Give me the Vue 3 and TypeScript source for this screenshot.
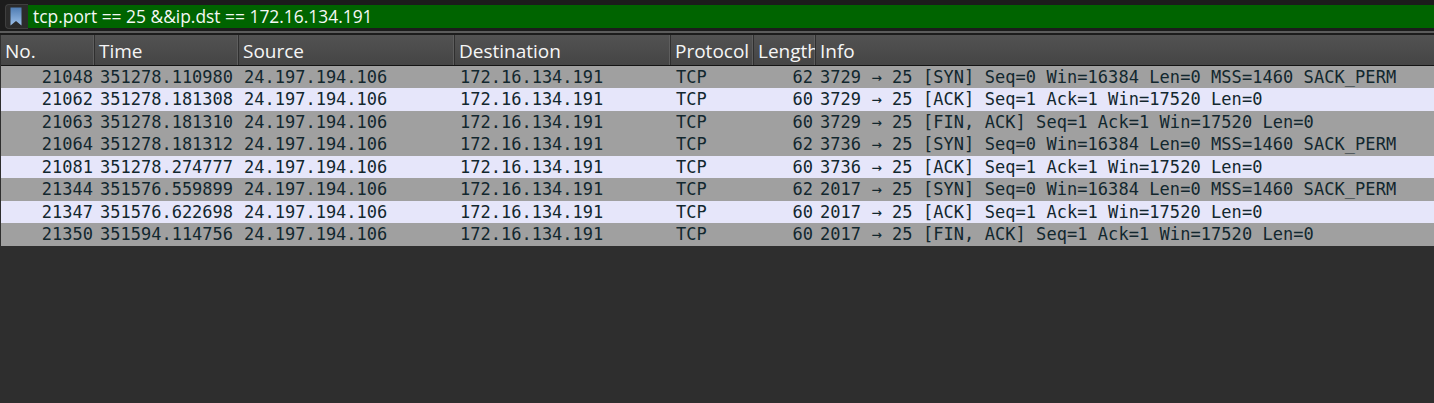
<script setup lang="ts">
interface Packet {
  no: number
  time: string
  length: number
  info: string
}

const source = '24.197.194.106'
const destination = '172.16.134.191'

const packets: Packet[] = [
  { no: 21048, time: '351278.110980', length: 62, info: '3729 → 25 [SYN] Seq=0 Win=16384 Len=0 MSS=1460 SACK_PERM' },
  { no: 21062, time: '351278.181308', length: 60, info: '3729 → 25 [ACK] Seq=1 Ack=1 Win=17520 Len=0' },
  { no: 21063, time: '351278.181310', length: 60, info: '3729 → 25 [FIN, ACK] Seq=1 Ack=1 Win=17520 Len=0' },
  { no: 21064, time: '351278.181312', length: 62, info: '3736 → 25 [SYN] Seq=0 Win=16384 Len=0 MSS=1460 SACK_PERM' },
  { no: 21081, time: '351278.274777', length: 60, info: '3736 → 25 [ACK] Seq=1 Ack=1 Win=17520 Len=0' },
  { no: 21344, time: '351576.559899', length: 62, info: '2017 → 25 [SYN] Seq=0 Win=16384 Len=0 MSS=1460 SACK_PERM' },
  { no: 21347, time: '351576.622698', length: 60, info: '2017 → 25 [ACK] Seq=1 Ack=1 Win=17520 Len=0' },
  { no: 21350, time: '351594.114756', length: 60, info: '2017 → 25 [FIN, ACK] Seq=1 Ack=1 Win=17520 Len=0' },
]

const columns = ['No.', 'Time', 'Source', 'Destination', 'Protocol', 'Length', 'Info']

function isAck (packet: Packet) {
  return packet.info.includes('[ACK]')
}
</script>

<template>
  <div class="app">
    <div class="filter-bar">
      <button class="bookmark">
        <svg width="12" height="19" viewBox="0 0 12 19">
          <defs>
            <linearGradient id="bm" x1="0" y1="0" x2="0" y2="1">
              <stop offset="0" stop-color="#4f7cb2" />
              <stop offset="1" stop-color="#9cc0ea" />
            </linearGradient>
          </defs>
          <path d="M0.5 0.5H11.5V18.5L6 14L0.5 18.5Z" fill="url(#bm)" />
        </svg>
      </button>
      <div class="filter-input">tcp.port == 25 &amp;&amp;ip.dst == 172.16.134.191</div>
    </div>
    <div class="list">
      <div class="header">
        <div v-for="column in columns" :key="column" class="head-cell">{{ column }}</div>
      </div>
      <div
        v-for="packet in packets"
        :key="packet.no"
        class="row"
        :class="{ ack: isAck(packet) }"
      >
        <span class="num">{{ packet.no }}</span>
        <span class="cell">{{ packet.time }}</span>
        <span class="cell">{{ source }}</span>
        <span class="cell">{{ destination }}</span>
        <span class="cell">TCP</span>
        <span class="num len">{{ packet.length }}</span>
        <span class="cell info">{{ packet.info }}</span>
      </div>
    </div>
  </div>
</template>

<style>
html,
body {
  margin: 0;
  background: #2e2e2e;
}
</style>

<style scoped>
.app {
  width: 1434px;
  height: 403px;
  overflow: hidden;
  background: #2e2e2e;
  display: flex;
  flex-direction: column;
  font-family: "Open Sans", "Noto Sans", sans-serif;
}

.filter-bar {
  height: 31px;
  box-sizing: border-box;
  padding: 4px 0 0 5px;
  background: #1c1c1c;
  display: flex;
}

.bookmark {
  width: 23px;
  height: 25px;
  padding: 0 0 0 4px;
  box-sizing: border-box;
  background: #2b2b2b;
  border: 1px solid #3f3f3f;
  border-right: none;
  border-radius: 4px 0 0 4px;
  display: flex;
  align-items: center;
}

.filter-input {
  flex: 1;
  height: 23px;
  margin-top: 1px;
  padding-left: 5px;
  background: #006400;
  color: #f4f8f4;
  font-size: 17.4px;
  line-height: 22px;
  white-space: pre;
}

.list {
  border-top: 2px solid #5c5c5c;
  box-shadow: inset 0 2px 0 #1c1c1c;
  padding: 2px 0 0 1px;
  background: #2e2e2e;
}

.header,
.row {
  display: grid;
  grid-template-columns: 94px 144px 216px 216px 83px 62px 1fr;
}

.header {
  height: 31px;
  box-sizing: border-box;
  background: linear-gradient(#525252, #454545);
  border-bottom: 1px solid #141414;
}

.head-cell {
  padding: 0 0 0 4px;
  border-right: 1px solid #2f2f2f;
  box-shadow: inset -1px 0 0 #5e5e5e;
  color: #f6f6f6;
  font-size: 19px;
  line-height: 32px;
  white-space: nowrap;
  overflow: hidden;
}

.head-cell:last-child {
  border-right: none;
  box-shadow: none;
}

.row {
  height: 23px;
  background: #a0a0a0;
  color: #12272e;
  font-family: "DejaVu Sans Mono", monospace;
  font-size: 17px;
  line-height: 22px;
  white-space: pre;
}

.row:nth-child(even) {
  height: 22px;
}

.row.ack {
  background: #e6e6fa;
}

.cell {
  padding-left: 5px;
  overflow: hidden;
}

.info {
  padding-left: 4px;
  letter-spacing: 0.055px;
}

.num {
  padding-right: 2px;
  text-align: right;
}

.len {
  padding-right: 3px;
}
</style>
